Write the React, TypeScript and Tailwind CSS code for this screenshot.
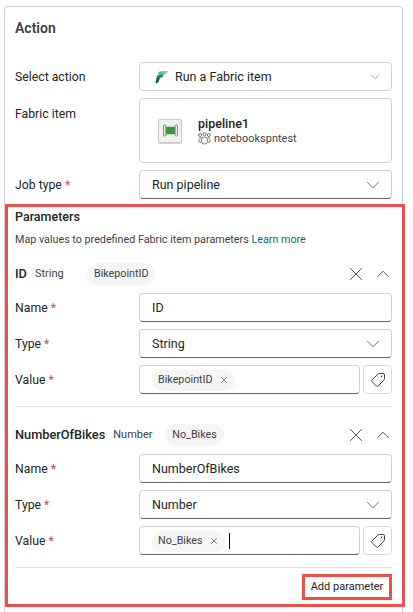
import { ChevronDown, ChevronUp, X } from 'lucide-react';

const labelCls = 'w-[124px] shrink-0 text-[12.25px] text-[#242424]';
const boxCls = 'flex h-[29px] items-center rounded-[4px] border border-[#d1d1d1] border-b-[#616161] bg-white pt-px pl-[12px] text-[12.5px] text-[#242424]';

function Req() {
  return <span className="text-[#d6455d]"> *</span>;
}

function FabricLogo() {
  return (
    <svg width="14" height="14" viewBox="0 0 14 14">
      <defs>
        <linearGradient id="fabricTop" x1="1" y1="0" x2="0" y2="1">
          <stop offset="0" stopColor="#7be8c4" />
          <stop offset="1" stopColor="#22b394" />
        </linearGradient>
      </defs>
      <path d="M4 3 Q5 1 8 1 L14 1 Q13 4 10 4.5 L5 5 Z" fill="url(#fabricTop)" />
      <path d="M3 6 Q3.5 5 5 5 L10 4.5 Q9 7.5 6 8 L2.5 8.5 Z" fill="#128a72" />
      <path d="M2.5 8 L6 7.8 L4.5 12 Q3.5 13.5 1.5 13 Z" fill="#0b5f57" />
    </svg>
  );
}

function PipelineIcon() {
  return (
    <div className="flex h-[24px] w-[24px] items-center justify-center rounded-[2px] border border-[#c8c8c8] bg-[#f0f0f0] shadow-[0_1px_1px_rgba(0,0,0,0.2)]">
      <svg width="15" height="13" viewBox="0 0 16 14">
        <rect x="3" y="3" width="10" height="8" fill="#3f9142" />
        <rect x="0.5" y="1" width="2.5" height="12" rx="1" fill="#e8f5e8" stroke="#4aa34d" />
        <rect x="13" y="1" width="2.5" height="12" rx="1" fill="#e8f5e8" stroke="#4aa34d" />
      </svg>
    </div>
  );
}

function WorkspaceIcon() {
  return (
    <svg width="13" height="13" viewBox="0 0 13 13" fill="none" stroke="#616161" strokeWidth="0.9">
      <circle cx="2.2" cy="3" r="1.5" />
      <circle cx="6.5" cy="2" r="1.5" />
      <circle cx="10.8" cy="3" r="1.5" />
      <path d="M0.8 6h2.6M9.6 6h2.6" />
      <rect x="3.6" y="5" width="5.8" height="7" rx="2.6" />
      <path d="M1 7.5v1.5q0 1.5 2 1.5M12 7.5v1.5q0 1.5-2 1.5" />
    </svg>
  );
}

function TagIcon() {
  return (
    <svg width="16" height="16" viewBox="0 0 16 16" fill="none" stroke="#424242" strokeWidth="1">
      <path d="M9.2 1.5h4a1.3 1.3 0 0 1 1.3 1.3v4a1.5 1.5 0 0 1-.5 1.1L8.2 14a1.3 1.3 0 0 1-1.8 0L2 9.6a1.3 1.3 0 0 1 0-1.8L8.1 2a1.5 1.5 0 0 1 1.1-.5Z" />
      <circle cx="11.6" cy="4.4" r="0.8" fill="#424242" stroke="none" />
    </svg>
  );
}

function FormRow({ label, children }: { label: React.ReactNode; children: React.ReactNode }) {
  return (
    <div className="flex items-center">
      <div className={`${labelCls} pt-px`}>{label}</div>
      <div className="min-w-0 flex-1">{children}</div>
    </div>
  );
}

function Chevron() {
  return <ChevronDown size={22} strokeWidth={1} className="mr-[7px] ml-auto text-[#616161]" />;
}

type Param = { name: string; type: string; value: string; focused?: boolean };

function ParamBlock({ name, type, value, focused }: Param) {
  return (
    <div className="flex flex-col">
      <div className="flex h-[22px] items-center">
        <span className="text-[12.75px] font-medium text-[#242424]">{name}</span>
        <span className="ml-[8px] w-[52px] text-[11px] text-[#424242]">{type}</span>
        <span className="flex h-[22px] items-center rounded-full bg-[#f5f5f5] px-[7px] text-[10.75px] text-[#424242]">{value}</span>
        <X size={22} strokeWidth={1} className="mr-[5px] ml-auto text-[#424242]" />
        <ChevronUp size={22} strokeWidth={1} className="-mr-[2px] text-[#424242]" />
      </div>
      <div className="mt-[8px] flex flex-col gap-[7px]">
        <FormRow label={<>Name<Req /></>}>
          <div className={boxCls}>{name}</div>
        </FormRow>
        <FormRow label={<>Type<Req /></>}>
          <div className={boxCls}>{type}<Chevron /></div>
        </FormRow>
        <FormRow label={<>Value<Req /></>}>
          <div className="flex gap-[3px]">
            <div className={`${boxCls} flex-1 ${focused ? 'border-b-[#0f7b6c]' : ''}`}>
              <span className="flex h-[21px] items-center rounded-full bg-[#f5f5f5] pr-[6px] pl-[6px] text-[10.75px] text-[#424242]">
                {value}
                <X size={10} strokeWidth={1.5} className="ml-[6px]" />
              </span>
              {focused && <span className="ml-[4px] h-[16px] w-px bg-black" />}
            </div>
            <button className="flex h-[29px] w-[29px] items-center justify-center rounded-[4px] border border-[#d9d9d9]">
              <TagIcon />
            </button>
          </div>
        </FormRow>
      </div>
    </div>
  );
}

export default function App() {
  return (
    <div className="h-[612px] w-[413px] overflow-hidden bg-white pt-[6px] pl-[4px] font-['Roboto','Open_Sans',sans-serif]">
      <div className="h-[640px] w-[399px] rounded-[4px] border border-[#d1d1d1]">
        <div className="flex flex-col px-[10px]">
          <h2 className="mt-[11px] h-[20px] text-[14px] leading-[20px] font-semibold text-[#424242]">Action</h2>
          <div className="mt-[24px] flex flex-col gap-[7px]">
            <FormRow label="Select action">
              <div className="flex h-[29px] items-center rounded-[4px] border border-[#d1d1d1] pt-px pl-[14px] text-[12.5px] text-[#242424]">
                <FabricLogo />
                <span className="ml-[7px]">Run a Fabric item</span>
                <ChevronDown size={14} strokeWidth={1} className="mr-[9px] ml-auto text-[#616161]" />
              </div>
            </FormRow>
            <div className="flex items-start">
              <div className={`${labelCls} pt-[7px]`}>Fabric item</div>
              <div className="flex h-[65px] flex-1 items-center rounded-[4px] border border-[#d1d1d1] pl-[18px]">
                <PipelineIcon />
                <div className="ml-[16px] flex flex-col">
                  <span className="text-[12.5px] leading-[16px] font-medium text-[#242424]">pipeline1</span>
                  <span className="flex items-center gap-[3px] text-[11px] leading-[13px] text-[#424242]">
                    <WorkspaceIcon />
                    notebookspntest
                  </span>
                </div>
              </div>
            </div>
            <FormRow label={<>Job type<Req /></>}>
              <div className={boxCls}>Run pipeline<Chevron /></div>
            </FormRow>
          </div>
        </div>

        <section className="mt-[5px] -mr-[3px] ml-0 h-[403px] border-[3px] border-[#ef4f4a] bg-white pr-[10px] pl-[7px]">
          <h3 className="mt-[1px] text-[12.5px] leading-[18px] font-medium text-[#242424]">Parameters</h3>
          <p className="mt-[5px] whitespace-nowrap text-[10.75px] leading-[18px] text-[#424242]">
            Map values to predefined Fabric item parameters <span className="text-[#0f6c6c]">Learn more</span>
          </p>
          <div className="mt-[14px]">
            <ParamBlock name="ID" type="String" value="BikepointID" />
          </div>
          <div className="mt-[12px] mb-[17px] h-px bg-[#e0e0e0]" />
          <ParamBlock name="NumberOfBikes" type="Number" value="No_Bikes" focused />
          <div className="mt-[12px] h-px bg-[#e0e0e0]" />
          <div className="mt-[6px] flex justify-end">
            <button className="flex h-[26px] w-[90px] items-center justify-center whitespace-nowrap border-[3px] border-[#ef4f4a] text-[11px] text-[#242424]">
              Add parameter
            </button>
          </div>
        </section>
      </div>
    </div>
  );
}
